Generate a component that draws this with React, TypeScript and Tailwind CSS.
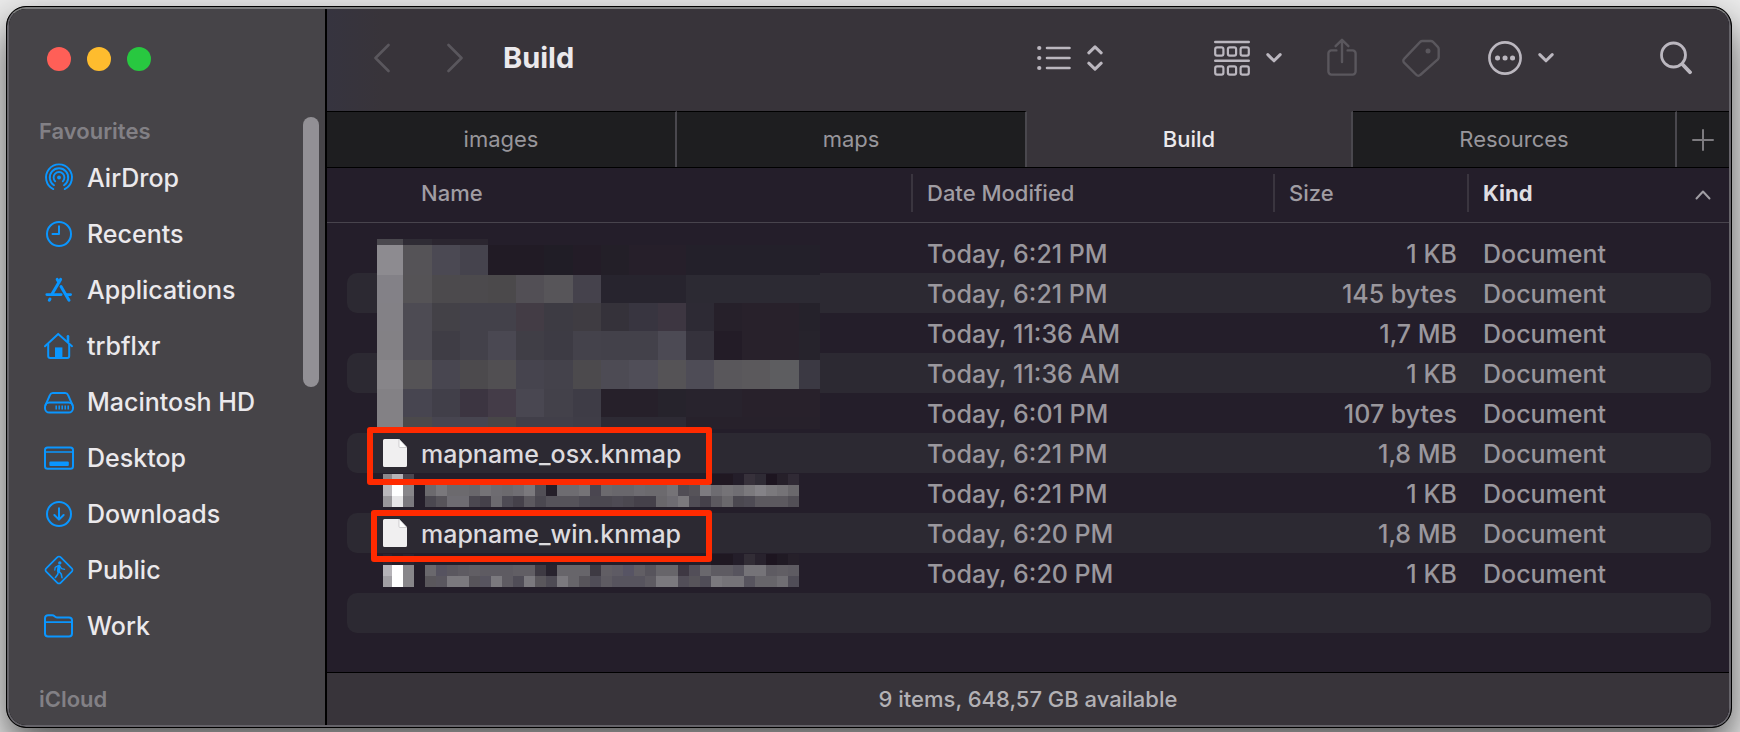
import type { ReactNode } from "react";

/* ---------- Sidebar icons ---------- */

function SideIcon({ children }: { children: ReactNode }) {
  return (
    <svg
      viewBox="0 0 32 32"
      className="size-8 shrink-0"
      fill="none"
      stroke="#0a96ff"
      strokeWidth="2"
      strokeLinecap="round"
      strokeLinejoin="round"
      aria-hidden="true"
    >
      {children}
    </svg>
  );
}

const favourites: { label: string; icon: ReactNode }[] = [
  {
    label: "AirDrop",
    icon: (
      <>
        <path d="M10.3 27.1a13 13 0 1 1 11.4 0" strokeWidth="1.9" />
        <path d="M11 23.2a9.2 9.2 0 1 1 10 0" strokeWidth="1.9" />
        <path d="M12.2 19.3a5.4 5.4 0 1 1 7.6 0" strokeWidth="1.9" />
        <circle cx="16" cy="15.5" r="1.9" fill="#0a96ff" stroke="none" />
      </>
    ),
  },
  {
    label: "Recents",
    icon: (
      <>
        <circle cx="16" cy="16" r="12" />
        <path d="M16 8.2V16H9.5" />
      </>
    ),
  },
  {
    label: "Applications",
    icon: (
      <>
        <path d="M17.6 5.4 9.2 19.8M14.2 5.4l1.8 3" strokeWidth="3" />
        <path d="M3.8 20.6h14.4M23.4 20.6h4.2" strokeWidth="2.8" />
        <path d="m18 12.6 8 13.6M7 25l-.7 1.2" strokeWidth="3" />
      </>
    ),
  },
  {
    label: "trbflxr",
    icon: (
      <>
        <path d="M2 16.2 15.2 3.9 29 16.2" />
        <path d="M5.2 14v12a2 2 0 0 0 2 2h17a2 2 0 0 0 2-2V14" />
        <path d="M25 6.2v5" strokeWidth="2.6" />
        <path d="M12 28.4v-11h7.4v11z" fill="#0a96ff" stroke="none" />
      </>
    ),
  },
  {
    label: "Macintosh HD",
    icon: (
      <>
        <path d="M2.5 19.2 7 8.8a3 3 0 0 1 2.8-1.9h12.4A3 3 0 0 1 25 8.8l4.5 10.4" />
        <rect x="2" y="16.6" width="28" height="10" rx="4.4" />
        <path
          d="M13.2 19.6v4M16.2 19.6v4M19.2 19.6v4M22.2 19.6v4M25.2 19.6v4"
          strokeWidth="1.5"
          strokeLinecap="butt"
        />
      </>
    ),
  },
  {
    label: "Desktop",
    icon: (
      <>
        <rect x="2" y="5.4" width="28" height="21.4" rx="2.6" />
        <path d="M2 10h28" strokeWidth="1.6" />
        <rect x="6.4" y="19.6" width="19.4" height="4.4" rx="1" fill="#0a96ff" stroke="none" />
      </>
    ),
  },
  {
    label: "Downloads",
    icon: (
      <>
        <circle cx="16" cy="16" r="12" />
        <path d="M16 10.2v11M11.4 17l4.6 4.6 4.6-4.6" />
      </>
    ),
  },
  {
    label: "Public",
    icon: (
      <>
        <path
          d="M14.4 3.2 3.2 14.4a2.2 2.2 0 0 0 0 3.2l11.2 11.2a2.2 2.2 0 0 0 3.2 0l11.2-11.2a2.2 2.2 0 0 0 0-3.2L17.6 3.2a2.2 2.2 0 0 0-3.2 0Z"
          strokeWidth="1.7"
        />
        <circle cx="16.8" cy="8.9" r="1.7" fill="#0a96ff" stroke="none" />
        <path d="M16 12.4 15.5 17" strokeWidth="3.2" />
        <path d="M15.4 17.6 14.6 20.6 12.4 23.4M16 17.4l2.2 2.6.8 3.6" strokeWidth="1.6" />
        <path d="M14.6 12 12.2 13.4 11.8 16M17 12.4l1.6 2.2 3 .8" strokeWidth="1.3" />
      </>
    ),
  },
  {
    label: "Work",
    icon: (
      <>
        <path d="M2 23.6V8.2a3 3 0 0 1 3-3h4.4c1 0 1.5.4 2.2 1l1 .8c.5.4 1 .5 1.6.5H26a3 3 0 0 1 3 3v13.1a3 3 0 0 1-3 3H5a3 3 0 0 1-3-3Z" />
        <path d="M2 12.2h27" strokeWidth="1.7" />
      </>
    ),
  },
];

/* ---------- Toolbar icons ---------- */

const bright = "#bbb7bf";
const dim = "#5a575d";

function Caret() {
  return (
    <svg viewBox="0 0 16 12" className="h-3 w-4 shrink-0" fill="none" stroke={bright} strokeWidth="3" strokeLinecap="round" strokeLinejoin="round" aria-hidden="true">
      <path d="m1.8 2.6 6.2 6.2 6.2-6.2" />
    </svg>
  );
}

function ListIcon() {
  return (
    <svg viewBox="0 0 34 26" className="h-[26px] w-[34px]" stroke={bright} strokeLinecap="round" aria-hidden="true">
      <path d="M10 3h22.5M10 13h22.5M10 23h22.5" strokeWidth="2.6" />
      <path d="M2.2 3h.1M2.2 13h.1M2.2 23h.1" strokeWidth="4.2" />
    </svg>
  );
}

function UpDownIcon() {
  return (
    <svg viewBox="0 0 16 26" className="h-[26px] w-4" fill="none" stroke={bright} strokeWidth="3" strokeLinecap="round" strokeLinejoin="round" aria-hidden="true">
      <path d="M1.8 7.8 8 1.8l6.2 6M1.8 18.2l6.2 6 6.2-6" />
    </svg>
  );
}

function GroupIcon() {
  return (
    <svg viewBox="0 0 36 36" className="size-9" fill="none" stroke={bright} strokeWidth="2.2" strokeLinecap="round" aria-hidden="true">
      <path d="M1.2 2h33.6M1.2 20.8h33.6" strokeWidth="2.4" />
      {[1.2, 13.9, 26.6].map((x) => (
        <g key={x}>
          <rect x={x} y="7.4" width="8.2" height="8.2" rx="1.8" />
          <rect x={x} y="26.4" width="8.2" height="8.2" rx="1.8" />
        </g>
      ))}
    </svg>
  );
}

function ShareIcon() {
  return (
    <svg viewBox="0 0 30 38" className="h-[38px] w-[30px]" fill="none" stroke={dim} strokeWidth="2.4" strokeLinecap="round" strokeLinejoin="round" aria-hidden="true">
      <path d="M9.4 12.4H4.4a3 3 0 0 0-3 3v18.2a3 3 0 0 0 3 3h21.2a3 3 0 0 0 3-3V15.4a3 3 0 0 0-3-3h-5" />
      <path d="M15 24V2M8.6 8.2 15 1.8l6.4 6.4" />
    </svg>
  );
}

function TagIcon() {
  return (
    <svg viewBox="0 0 38 38" className="size-[38px]" fill="none" stroke={dim} strokeWidth="2.4" strokeLinejoin="round" aria-hidden="true">
      <path d="M20.4 2h8.4c.9 0 1.6.3 2.2.9l4.8 5c.6.6.9 1.3.9 2.2v8c0 .9-.3 1.6-.9 2.2L18.2 36a2.6 2.6 0 0 1-3.7 0L2.1 23.6a2.6 2.6 0 0 1 0-3.7L18.2 2.9c.6-.6 1.3-.9 2.2-.9Z" />
      <circle cx="26" cy="12" r="2.5" fill={dim} stroke="none" />
    </svg>
  );
}

function MoreIcon() {
  return (
    <svg viewBox="0 0 34 34" className="size-[34px]" fill="none" stroke={bright} aria-hidden="true">
      <circle cx="17" cy="17" r="15.6" strokeWidth="2.6" />
      <path d="M9.5 17h.1M17 17h.1M24.5 17h.1" strokeWidth="5" strokeLinecap="round" />
    </svg>
  );
}

function SearchIcon() {
  return (
    <svg viewBox="0 0 32 34" className="h-[34px] w-8" fill="none" stroke={bright} strokeLinecap="round" aria-hidden="true">
      <circle cx="13.5" cy="14" r="12" strokeWidth="2.8" />
      <path d="m22.4 23.2 7.6 8" strokeWidth="3.8" />
    </svg>
  );
}

/* ---------- Redacted file names ---------- */

const largeX = [0, 26, 55, 83, 111, 139, 167, 196, 224, 252, 281, 309, 337, 365, 393, 422, 443];
const largeY = [0, 6, 36, 64, 92, 121, 150, 178, 190];
const largeRows = [
  "4a484e 2f2c35 2b2630 2b2630 241e2a 241e2a 241e2a 241e2a 241e2a 241e2a 241e2a 241e2a 241e2a 241e2a 241e2a 241e2a",
  "8d8b90 555357 4b4953 45434d 211b25 211b25 201d26 231c27 231f28 261f2a 261f2a 23202a 23202a 23202a 23202a 23202a",
  "838187 555356 4c4a4d 4c4a4d 4b494b 524f55 575559 45424c 27242e 27242e 27242e 2c2a33 2c2a33 2c2a33 2c2a33 2c2a33",
  "838186 4d4b53 434147 43414a 43414a 433c45 3d3b43 3f3c42 35323a 383540 3d3641 2d2a34 26202a 28212b 28212b 25222b",
  "838185 4d4b53 3f3d45 43414a 4a4852 403e46 3d3b44 44424b 43414a 43414a 4c4a54 35323c 231c27 28212b 28212b 26232c",
  "878589 555356 484650 4c4a4d 514f52 46444e 44424b 4c4a4d 4d4b54 504e58 555356 4e4c56 59575b 5b595c 5d5d60 3b3943",
  "838185 474550 413f49 3c3541 443c48 494751 43414a 3e3c46 26202a 26202a 26232c 28232d 28232d 28212b 28212b 28212b",
  "838185 4b494b 474550 474550 484648 413f49 413f49 3f3d47 2d2a34 2d2a34 2d2a34 27212b 27212b 27212b 27212b 27212b",
];

const range = (start: number, step: number, count: number) =>
  Array.from({ length: count + 1 }, (_, i) => start + i * step);

const iconX = [0, 9, 20, 31];
const smallX = range(42, 11, 34);

const fifthName = {
  icon: ["8a888c b4b2b6 4a464f", "b9b7bb ffffff 88868a", "98969a e6e5e7 7b797e"],
  text: [
    "241e2a 241e2a 241e2a 241e2a 241e2a 241e2a 241e2a 241e2a 241e2a 241e2a 241e2a 241e2a 241e2a 241e2a 241e2a 241e2a 241e2a 241e2a 241e2a 241e2a 241e2a 241e2a 241e2a 241e2a 241e2a 241e2a 201822 201822 241e2a 37313b 2f2b35 1d1520 26202a 302a35",
    "6c6a6e 7a787c 6c6a6e 6c6a6e 69676b 757377 6e6c71 6c6a6e 706e73 7b797d 524f56 251f29 6e6c71 6e6c71 757377 4a4650 6c6a6e 69676c 69676c 6e6c71 6c6a6e 6c6a6e 757377 504d55 565359 7d7b80 6e6c71 757377 706e73 7b797d 848287 7b797d 757377 6a686c",
    "4b4850 57545a 6e6c72 6e6c72 4b4850 45414a 6c6a6f 4e4b54 45414a 5c595f 4b4850 56535a 56535a 56535a 4e4b54 4b4850 4b4850 4e4b54 4b4850 45414a 45414a 69676b 6e6c72 7b797d 504d55 45414a 5c595f 6a686c 4b4850 4e4b54 5c595f 5c595f 5c595f 524f56",
  ],
};

const sixthName = {
  icon: ["2a2430 26202a 2a2430", "b5b3b8 ffffff 88868a", "a19fa4 ffffff 88868a"],
  text: [
    "241e2a 241e2a 241e2a 241e2a 241e2a 241e2a 241e2a 241e2a 241e2a 241e2a 241e2a 241e2a 241e2a 241e2a 241e2a 241e2a 241e2a 241e2a 241e2a 241e2a 241e2a 241e2a 241e2a 241e2a 241e2a 241e2a 1f1822 1f1822 241e2a 322d36 28222d 1d1520 201a24 26202a",
    "6a686d 565360 5a575f 5e5b62 615e64 5e5b62 5e5b62 5e5b62 615e64 615e64 3e3a43 28232e 67656a 67656a 67656a 3e3a43 615e64 5e5b64 575464 615e64 57545c 67656a 67656a 3e3843 524e58 6a686d 5e5b62 5e5b62 57545e 757378 757378 5e5b62 615e64 5e5b62",
    "5a575c 5a575f 7b797e 7b797e 57545a 57545f 7b797e 5e5b62 504d57 7b797e 5a575c 4e4b54 7b797e 67656a 57545a 504d57 5e5b62 57545e 57545e 57545e 5e5b62 7b797e 7b797e 524e58 57545a 504d57 7b797e 757378 757378 57545e 67656a 67656a 706e73 504d57",
  ],
};

function Blocks({ xs, ys, rows }: { xs: number[]; ys: number[]; rows: string[] }) {
  return (
    <>
      {rows.map((row, r) =>
        row.split(" ").map((c, i) => (
          <rect key={`${r}-${i}`} x={xs[i]} y={ys[r]} width={xs[i + 1] - xs[i]} height={ys[r + 1] - ys[r]} fill={`#${c}`} />
        )),
      )}
    </>
  );
}

function LargeRedaction() {
  return (
    <svg viewBox="0 0 443 190" className="absolute top-1.5 left-[30px] z-10 h-[190px] w-[443px]" shapeRendering="crispEdges" aria-hidden="true">
      <Blocks xs={largeX} ys={largeY} rows={largeRows} />
    </svg>
  );
}

function SmallRedaction({ data }: { data: { icon: string[]; text: string[] } }) {
  const ys = [0, 11, 22, 33];
  return (
    <svg viewBox="0 0 416 33" className="absolute top-px left-9 h-[33px] w-[416px]" shapeRendering="crispEdges" aria-hidden="true">
      <Blocks xs={iconX} ys={ys} rows={data.icon} />
      <Blocks xs={smallX} ys={ys} rows={data.text} />
    </svg>
  );
}

function FileIcon() {
  return (
    <svg viewBox="0 0 24 28" className="h-7 w-6 shrink-0" aria-hidden="true">
      <path d="M1.5 0H16l8 8.5v18a1.5 1.5 0 0 1-1.5 1.5h-21A1.5 1.5 0 0 1 0 26.500v-25A1.5 1.5 0 0 1 1.5 0Z" fill="#f0eff0" />
      <path d="M16 0v7.5a1 1 0 0 0 1 1h7Z" fill="#ffffff" stroke="#bdbbbf" strokeWidth="0.7" />
    </svg>
  );
}

function FileName({ name }: { name: string }) {
  return (
    <span className="flex items-center gap-3.5 pl-9 text-[#dddbdf]">
      <FileIcon />
      <span className="pt-0.5">{name}</span>
    </span>
  );
}

/* ---------- File list ---------- */

type Row = { name?: ReactNode; date: string; size: string; kind: string };

const rows: Row[] = [
  { name: <LargeRedaction />, date: "Today, 6:21 PM", size: "1 KB", kind: "Document" },
  { date: "Today, 6:21 PM", size: "145 bytes", kind: "Document" },
  { date: "Today, 11:36 AM", size: "1,7 MB", kind: "Document" },
  { date: "Today, 11:36 AM", size: "1 KB", kind: "Document" },
  { date: "Today, 6:01 PM", size: "107 bytes", kind: "Document" },
  {
    name: (
      <>
        <FileName name="mapname_osx.knmap" />
        <span className="absolute -top-1.5 left-5 z-20 h-[58px] w-[345px] rounded-[3px] border-6 border-[#ff2a00]" />
      </>
    ),
    date: "Today, 6:21 PM",
    size: "1,8 MB",
    kind: "Document",
  },
  { name: <SmallRedaction data={fifthName} />, date: "Today, 6:21 PM", size: "1 KB", kind: "Document" },
  {
    name: (
      <>
        <FileName name="mapname_win.knmap" />
        <span className="absolute -top-[3px] left-6 z-20 h-[52px] w-[341px] rounded-[3px] border-6 border-[#ff2a00]" />
      </>
    ),
    date: "Today, 6:20 PM",
    size: "1,8 MB",
    kind: "Document",
  },
  { name: <SmallRedaction data={sixthName} />, date: "Today, 6:20 PM", size: "1 KB", kind: "Document" },
  { date: "", size: "", kind: "" },
];

function FileTable() {
  return (
    <table className="w-full table-fixed border-separate border-spacing-0 text-left">
      <colgroup>
        <col className="w-5" />
        <col />
        <col className="w-[362px]" />
        <col className="w-[194px]" />
        <col className="w-[242px]" />
        <col className="w-[18px]" />
      </colgroup>
      <thead className="text-[22px] leading-[38px] text-[#a09da3] [&_th]:h-[55px] [&_th]:border-b [&_th]:border-[#48444d] [&_th]:p-0 [&_th]:font-medium">
        <tr>
          <td className="border-b border-[#48444d] p-0" />
          <th scope="col">
            <div className="mb-1 border-r-2 border-[#3a353f] pl-[74px]">Name</div>
          </th>
          <th scope="col">
            <div className="mb-1 border-r-2 border-[#3a353f] pl-3.5">Date Modified</div>
          </th>
          <th scope="col">
            <div className="mb-1 border-r-2 border-[#3a353f] pl-3.5">Size</div>
          </th>
          <th scope="col" aria-sort="ascending">
            <button type="button" className="mb-1 flex w-full items-center justify-between pl-3.5 text-left font-bold text-[#dfdde1]">
              Kind
              <svg viewBox="0 0 16 10" className="mt-1 h-2.5 w-4" fill="none" stroke="#a09da3" strokeWidth="2" strokeLinecap="round" strokeLinejoin="round" aria-hidden="true">
                <path d="m1.5 8.5 6.5-7 6.5 7" />
              </svg>
            </button>
          </th>
          <td className="border-b border-[#48444d] p-0" />
        </tr>
      </thead>
      <tbody className="text-[25px] leading-[38px] font-medium whitespace-nowrap text-[#9a979d] before:block before:h-2.5 before:content-['']">
        {rows.map((row, i) => (
          <tr key={i} className="group h-10 [&>td]:p-0">
            <td />
            <td className="relative rounded-l-[10px] group-even:bg-[#2c2932]">{row.name}</td>
            <td className="group-even:bg-[#2c2932]">
              <span className="block pt-0.5 pl-3.5">{row.date}</span>
            </td>
            <td className="text-right group-even:bg-[#2c2932]">
              <span className="block pt-0.5 pr-3">{row.size}</span>
            </td>
            <td className="rounded-r-[10px] group-even:bg-[#2c2932]">
              <span className="block pt-0.5 pl-3.5">{row.kind}</span>
            </td>
            <td />
          </tr>
        ))}
      </tbody>
    </table>
  );
}

function Sidebar() {
  return (
    <aside className="relative flex w-[318px] shrink-0 flex-col border-r-2 border-black bg-[#464448]">
      <div className="flex gap-4 pt-[38px] pl-[38px]">
        <button type="button" aria-label="Close" className="size-6 rounded-full bg-[#ff5f57]" />
        <button type="button" aria-label="Minimise" className="size-6 rounded-full bg-[#febc2e]" />
        <button type="button" aria-label="Zoom" className="size-6 rounded-full bg-[#28c840]" />
      </div>
      <h2 className="mt-[45px] mb-1 pl-[30px] text-[22px] leading-[30px] font-semibold text-[#828085]">Favourites</h2>
      <nav aria-label="Favourites">
        {favourites.map(({ label, icon }) => (
          <a key={label} href="#" className="flex h-14 items-center gap-3 pl-[34px] text-[25px] font-medium text-[#ebe9ec]">
            <SideIcon>{icon}</SideIcon>
            <span className="pt-0.5">{label}</span>
          </a>
        ))}
      </nav>
      <h2 className="mt-[30px] pl-[30px] text-[22px] leading-[30px] font-semibold text-[#828085]">iCloud</h2>
      <div className="absolute top-[108px] right-1.5 h-[270px] w-4 rounded-full bg-[#929095]" />
    </aside>
  );
}

function Toolbar() {
  return (
    <header className="flex h-[102px] shrink-0 items-center bg-linear-to-r from-[#36343f] via-[#38343a] via-4% to-[#38343a] pr-[37px] pb-1 pl-[47px]">
      <button type="button" aria-label="Back">
        <svg viewBox="0 0 16 30" className="h-[30px] w-4" fill="none" stroke={dim} strokeWidth="2.6" strokeLinecap="round" strokeLinejoin="round">
          <path d="M14.5 2 1.5 15l13 13" />
        </svg>
      </button>
      <button type="button" aria-label="Forward" className="ml-[57px]">
        <svg viewBox="0 0 16 30" className="h-[30px] w-4" fill="none" stroke={dim} strokeWidth="2.6" strokeLinecap="round" strokeLinejoin="round">
          <path d="m1.5 2 13 13-13 13" />
        </svg>
      </button>
      <h1 className="ml-10 flex-1 text-[29px] leading-10 font-bold text-[#ebe9ec]">Build</h1>
      <button type="button" aria-label="View as list" className="mr-[111px] flex items-center gap-4">
        <ListIcon />
        <UpDownIcon />
      </button>
      <button type="button" aria-label="Group items" className="mr-[45px] flex items-center gap-4">
        <GroupIcon />
        <Caret />
      </button>
      <button type="button" aria-label="Share" className="mr-[45px] pb-0.5">
        <ShareIcon />
      </button>
      <button type="button" aria-label="Edit tags" className="mr-12">
        <TagIcon />
      </button>
      <button type="button" aria-label="More actions" className="mr-[106px] flex items-center gap-4">
        <MoreIcon />
        <Caret />
      </button>
      <button type="button" aria-label="Search">
        <SearchIcon />
      </button>
    </header>
  );
}

function Tabs() {
  return (
    <div role="tablist" className="grid h-[57px] shrink-0 grid-cols-[350fr_350fr_326fr_324fr_52px] border-b border-black text-[22px]">
      {["images", "maps", "Build", "Resources"].map((tab) => (
        <button
          key={tab}
          type="button"
          role="tab"
          aria-selected={tab === "Build"}
          className="border-t border-r-2 border-t-black border-r-[#4a484e] bg-[#1e1e20] text-[#98969b] aria-selected:border-t-[#38343a] aria-selected:bg-[#38343a] aria-selected:font-medium aria-selected:text-[#ebe9ec]"
        >
          {tab}
        </button>
      ))}
      <button type="button" aria-label="New tab" className="flex items-center justify-center border-t border-black bg-[#1e1e20]">
        <svg viewBox="0 0 22 22" className="size-[22px]" stroke="#7d7b7f" strokeWidth="2" strokeLinecap="round">
          <path d="M11 1v20M1 11h20" />
        </svg>
      </button>
    </div>
  );
}

export default function App() {
  return (
    <div className="flex min-h-screen overflow-hidden bg-[#ededed] pt-1.5 pr-2 pb-1 pl-1.5 font-['Inter','Liberation_Sans',sans-serif]">
      <div className="flex w-full overflow-hidden rounded-[20px] border border-black bg-black shadow-[0_18px_40px_rgba(0,0,0,0.65)]">
        <div className="flex w-full overflow-hidden rounded-[19px] border-2 border-[#656369] border-t-[#7c7d7d]">
          <Sidebar />
          <main className="flex min-w-0 flex-1 flex-col bg-[#241e2a]">
            <Toolbar />
            <Tabs />
            <div className="flex-1">
              <FileTable />
            </div>
            <footer className="flex h-[53px] shrink-0 items-center justify-center border-t border-black bg-[#38343a] text-[22px] font-medium text-[#b3b1b5]">
              9 items, 648,57 GB available
            </footer>
          </main>
        </div>
      </div>
    </div>
  );
}
